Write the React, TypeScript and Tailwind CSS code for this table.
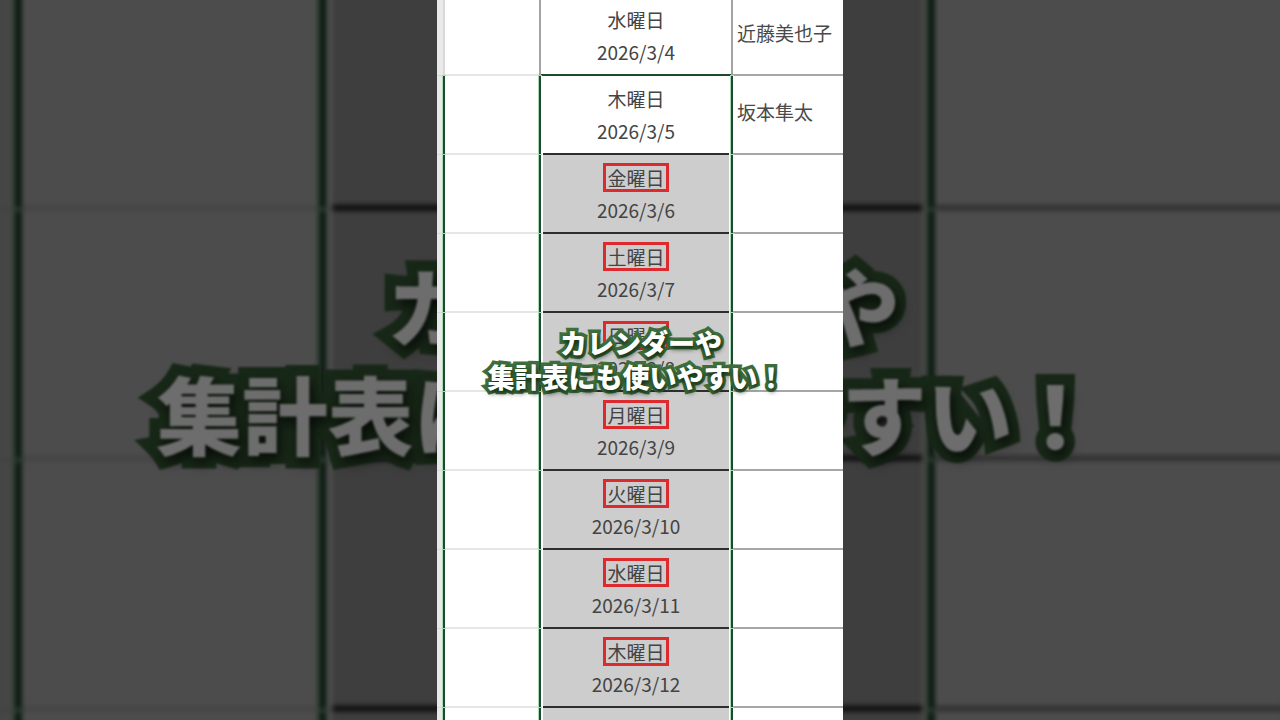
import React from "react";

type Day = {
  day?: string;
  date?: string;
  name?: string;
};

const rows: Day[] = [
  { day: "水曜日", date: "2026/3/4", name: "近藤美也子" },
  { day: "木曜日", date: "2026/3/5", name: "坂本隼太" },
  { day: "金曜日", date: "2026/3/6" },
  { day: "土曜日", date: "2026/3/7" },
  { day: "日曜日", date: "2026/3/8" },
  { day: "月曜日", date: "2026/3/9" },
  { day: "火曜日", date: "2026/3/10" },
  { day: "水曜日", date: "2026/3/11" },
  { day: "木曜日", date: "2026/3/12" },
  {},
];

const green = "w-[2px] shrink-0 bg-[#1d4a2c] shadow-[0_0_0_1px_#a9d9b7]";
const gray = "w-[2px] shrink-0 bg-[#a3a3a3]";

function SheetRow({ row, index }: { row: Day; index: number }) {
  const selected = index >= 1;
  const filled = index >= 2;

  return (
    <div className="flex h-[79px] shrink-0">
      <div className="w-[6px] shrink-0 border-b border-[#d8d8d8] bg-[#e9e9e9]" />
      <div className={selected ? green : "w-[2px] shrink-0 bg-[#d9d9d9]"} />
      <div className="w-[94px] shrink-0 border-b-2 border-[#e6e6e6] bg-white" />
      <div className={selected ? green : gray} />

      {index === 0 ? (
        <div className="flex w-[190px] shrink-0 flex-col items-center justify-center border-b-2 border-[#1d4a2c] bg-white">
          <DayCell row={row} marked={false} />
        </div>
      ) : (
        <div className="w-[190px] shrink-0 bg-white px-[2px]">
          <div
            className={
              "flex h-full flex-col items-center justify-center border-b-2 border-[#2e2e2e] " +
              (filled ? "bg-[#cdcdcd]" : "bg-white")
            }
          >
            <DayCell row={row} marked={filled} />
          </div>
        </div>
      )}

      <div className={selected ? green : gray} />
      <div className="flex flex-1 items-center border-b-2 border-[#a6a6a6] bg-white pb-[5px] pl-[4px] text-[19px] text-[#4a4a4a]">
        {row.name}
      </div>
    </div>
  );
}

function DayCell({ row, marked }: { row: Day; marked: boolean }) {
  if (!row.day) return null;
  return (
    <>
      <div className="flex h-[33px] items-center justify-center">
        {marked ? (
          <span className="border-[3px] border-[#dc2a2e] px-[1px] py-[2px] leading-[19px]">
            {row.day}
          </span>
        ) : (
          <span className="leading-[19px]">{row.day}</span>
        )}
      </div>
      <div className="flex h-[33px] items-center justify-center">{row.date}</div>
    </>
  );
}

function Frame({ backdrop }: { backdrop?: boolean }) {
  return (
    <div className="relative h-[720px] w-[406px] overflow-hidden">
      <div
        className={
          "flex flex-col -mt-[3px] text-[19px] text-[#444] " +
          (backdrop ? "brightness-[0.3] blur-[0.8px]" : "")
        }
      >
        {rows.map((row, i) => (
          <SheetRow key={i} row={row} index={i} />
        ))}
      </div>

      <div
        className={
          "absolute inset-x-0 top-[326px] text-center text-[27px] font-black leading-[34px] [paint-order:stroke_fill] " +
          (backdrop
            ? "text-[#6d6d6d] [-webkit-text-stroke:7px_#182818] [text-shadow:1px_2px_4px_rgba(0,0,0,0.75)] blur-[0.3px]"
            : "text-white [-webkit-text-stroke:7px_#3f6f3c] [text-shadow:1px_3px_5px_rgba(5,25,5,0.9)]")
        }
      >
        <div className="pl-[2px]">カレンダーや</div>
        <div className="-ml-[8px]">集計表にも使いやすい！</div>
      </div>
    </div>
  );
}

export default function App() {
  return (
    <div className="relative h-[720px] w-[1280px] overflow-hidden bg-[#3e3e3e] font-['Noto_Sans_CJK_JP','Noto_Sans',sans-serif]">
      <div className="absolute inset-0 flex justify-center">
        <div className="scale-[3.17]">
          <Frame backdrop />
        </div>
      </div>
      <div className="relative z-10 mx-auto w-[406px]">
        <Frame />
      </div>
    </div>
  );
}
